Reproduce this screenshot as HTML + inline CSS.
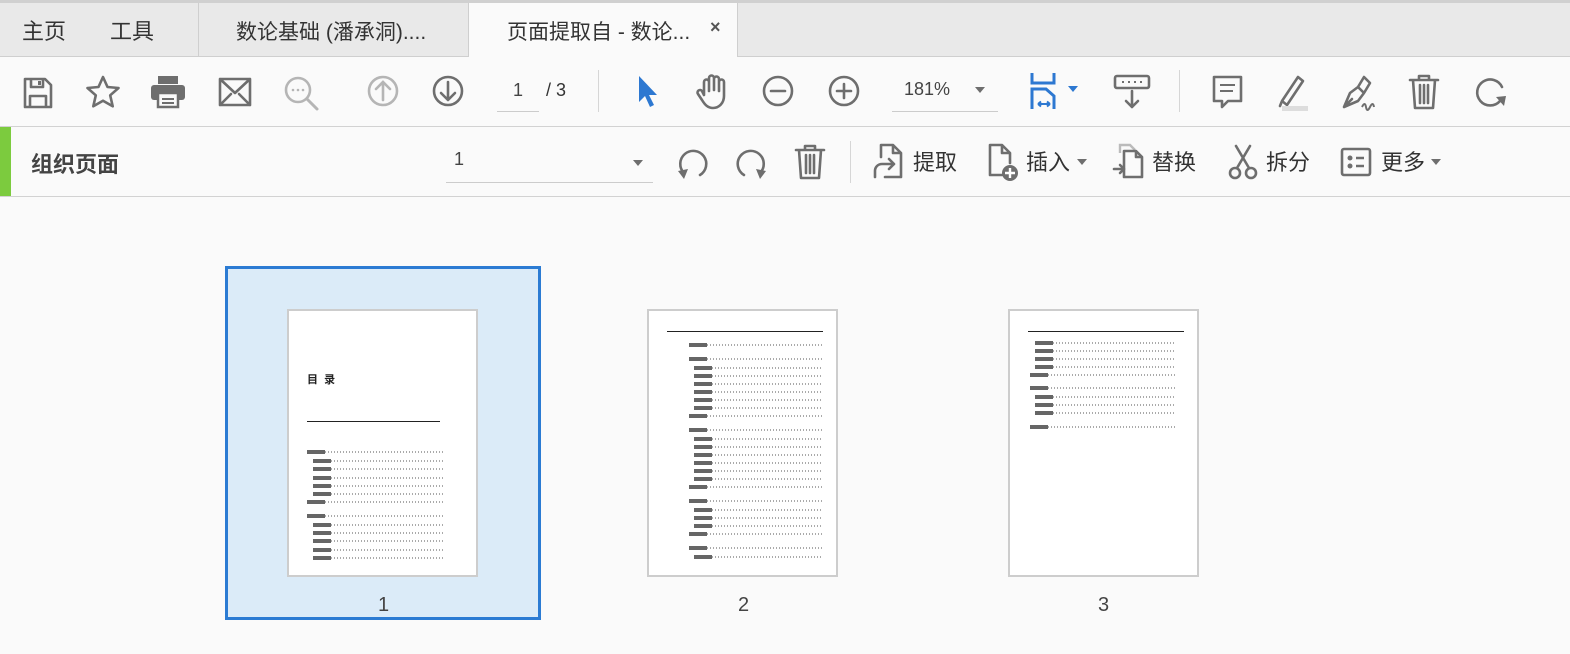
<!DOCTYPE html>
<html><head><meta charset="utf-8"><style>
*{margin:0;padding:0;box-sizing:border-box}
body{width:1570px;height:654px;overflow:hidden;background:#fafafa;font-family:"Liberation Sans","Noto Sans CJK SC",sans-serif;color:#333;position:relative}
.abs{position:absolute}
#tabs{left:0;top:0;width:1570px;height:57px;background:#e9e9e9;border-top:3px solid #d0d0d0;border-bottom:1px solid #cfcfcf}
.t{position:absolute;font-size:22px;color:#333;top:11px}
#tb{left:0;top:57px;width:1570px;height:70px;background:#fafafa;border-bottom:1px solid #d2d2d2}
#org{left:0;top:127px;width:1570px;height:70px;background:#fafafa;border-bottom:1px solid #d2d2d2}
svg{position:absolute;overflow:visible}
.g{fill:none;stroke:#6e6e6e;stroke-width:2.6;stroke-linecap:round;stroke-linejoin:round}
.lbl{position:absolute;font-size:22px;color:#333;top:18px}
.pg{position:absolute;background:#fff;border:2px solid #cdcdcd;width:191px;height:268px;top:309px}
.ln{position:absolute;height:2px;background-image:repeating-linear-gradient(90deg,#aaa 0 1px,transparent 1px 3px)}
.ln::before{content:"";position:absolute;left:0;top:-1px;width:18px;height:4px;background:#666}
.bk{position:absolute;height:4px;background:#444}
.num{position:absolute;font-size:20px;color:#444;top:594px}
</style></head><body>
<div id="tabs" class="abs">
 <div class="t" style="left:22px">主页</div>
 <div class="t" style="left:110px">工具</div>
 <div class="abs" style="left:198px;top:0;width:1px;height:53px;background:#cfcfcf"></div>
 <div class="t" style="left:236px;font-size:21px;top:13px">数论基础 (潘承洞)....</div>
 <div class="abs" style="left:468px;top:0;width:270px;height:54px;background:#fafafa;border-left:1px solid #cfcfcf;border-right:1px solid #cfcfcf"></div>
 <div class="t" style="left:507px;font-size:21px;top:13px">页面提取自 - 数论...</div>
 <div class="t" style="left:710px;font-size:18px;top:14px;font-weight:bold;color:#555">×</div>
</div>
<div id="tb" class="abs">
 <svg style="left:23px;top:20px" width="30" height="32"><path class="g" d="M2 2h20l6 6v22H2z M8 2v8h12V2 M7 30V19h16v11"/><rect x="15" y="4" width="3" height="4" fill="#6e6e6e"/></svg>
 <svg style="left:86px;top:18px" width="34" height="34"><path class="g" d="M17 2l4.5 10 11 1-8.3 7.3 2.5 11L17 25.7 7.3 31.3l2.5-11L1.5 13l11-1z"/></svg>
 <svg style="left:150px;top:18px" width="36" height="34"><rect x="8" y="1" width="20" height="8" fill="#6e6e6e"/><rect x="1" y="10" width="34" height="15" rx="3" fill="#6e6e6e"/><rect x="8" y="18" width="20" height="14" fill="#fafafa" stroke="#6e6e6e" stroke-width="2.5"/><path d="M12 24h12M12 28h12" stroke="#6e6e6e" stroke-width="2"/></svg>
 <svg style="left:218px;top:20px" width="34" height="30"><path class="g" d="M2 2h30v26H2z M2 2l15 14 15-14 M2 28l11-11 M32 28L21 17"/></svg>
 <svg style="left:283px;top:18px" width="38" height="38"><circle cx="15" cy="15" r="12" fill="none" stroke="#b5b5b5" stroke-width="2.6"/><path d="M24 24l10 10" stroke="#b5b5b5" stroke-width="3" stroke-linecap="round"/><circle cx="10" cy="15" r="1.3" fill="#b5b5b5"/><circle cx="15" cy="15" r="1.3" fill="#b5b5b5"/><circle cx="20" cy="15" r="1.3" fill="#b5b5b5"/></svg>
 <svg style="left:367px;top:18px" width="34" height="34"><circle cx="16" cy="16" r="14" fill="none" stroke="#b5b5b5" stroke-width="2.6"/><path d="M16 25V8M9 14l7-7 7 7" fill="none" stroke="#b5b5b5" stroke-width="2.6" stroke-linecap="round"/></svg>
 <svg style="left:432px;top:18px" width="34" height="34"><circle cx="16" cy="16" r="14" class="g"/><path class="g" d="M16 7v17M9 18l7 7 7-7"/></svg>
 <div class="abs" style="left:497px;top:23px;font-size:18px;color:#444;width:42px;text-align:center;border-bottom:1px solid #ccc;height:32px">1</div>
 <div class="abs" style="left:546px;top:23px;font-size:18px;color:#333">/ 3</div>
 <div class="abs" style="left:598px;top:13px;width:1px;height:42px;background:#d6d6d6"></div>
 <svg style="left:636px;top:18px" width="24" height="34"><path d="M3 1v26l6-6 5 11 4-2-5-10h8z" fill="#2d78d1"/></svg>
 <svg style="left:696px;top:16px" width="36" height="38"><path class="g" d="M8 22V9a2.5 2.5 0 015 0v9V5a2.5 2.5 0 015 0v12V6a2.5 2.5 0 015 0v12V9a2.5 2.5 0 015 0v14c0 7-5 12-11 12-5 0-8-3-11-8l-4-6a2.5 2.5 0 014-3z"/></svg>
 <svg style="left:762px;top:18px" width="34" height="34"><circle cx="16" cy="16" r="14" class="g"/><path class="g" d="M9 16h14"/></svg>
 <svg style="left:828px;top:18px" width="34" height="34"><circle cx="16" cy="16" r="14" class="g"/><path class="g" d="M9 16h14M16 9v14"/></svg>
 <div class="abs" style="left:892px;top:22px;width:106px;height:33px;border-bottom:1px solid #ccc;font-size:18px;color:#444;padding-left:12px">181%</div>
 <svg style="left:975px;top:30px" width="10" height="6"><path d="M0 0h10L5 6z" fill="#6e6e6e"/></svg>
 <svg style="left:1030px;top:16px" width="50" height="40"><path d="M2 0v10h22V0" fill="none" stroke="#2d78d1" stroke-width="3"/><path d="M2 36V16h14l8 7v13" fill="none" stroke="#2d78d1" stroke-width="3"/><path d="M8 31h12M8 31l3-2.5M8 31l3 2.5M20 31l-3-2.5M20 31l-3 2.5" stroke="#2d78d1" stroke-width="2"/><path d="M38 13h10l-5 6z" fill="#2d78d1"/></svg>
 <svg style="left:1114px;top:18px" width="36" height="36"><rect x="1" y="1" width="34" height="12" rx="2" class="g"/><path d="M8 7h2M14 7h2M20 7h2M26 7h2" stroke="#6e6e6e" stroke-width="2"/><path class="g" d="M18 16v16M12 26l6 6 6-6"/></svg>
 <div class="abs" style="left:1179px;top:13px;width:1px;height:42px;background:#d6d6d6"></div>
 <svg style="left:1212px;top:18px" width="32" height="36"><path class="g" d="M2 2h27v24H16l-6 6v-6H2z"/><path d="M8 10h15M8 16h13" stroke="#6e6e6e" stroke-width="2"/></svg>
 <svg style="left:1274px;top:16px" width="40" height="40"><path class="g" d="M8 28l16-24 5 4-16 24z M8 28l-2 5"/><rect x="8" y="33" width="26" height="5" fill="#ddd"/></svg>
 <svg style="left:1340px;top:16px" width="40" height="40"><path class="g" d="M4 34l6-14 8-6 6 6-6 8z M18 14l6-10 6 6-6 10 M4 34l8-8"/><path d="M22 34q3-6 4 0t4 0t4 0" fill="none" stroke="#6e6e6e" stroke-width="2"/></svg>
 <svg style="left:1408px;top:16px" width="32" height="38"><path class="g" d="M2 7h28M11 7V3h10v4M5 7l2 28h18l2-28M12 12v18M16 12v18M20 12v18"/></svg>
 <svg style="left:1474px;top:18px" width="34" height="34"><path class="g" d="M26 26A13 13 0 1 1 28 12"/><path d="M22 22l8 9 2-10z" fill="#6e6e6e"/></svg>
</div>
<div id="org" class="abs">
 <div class="abs" style="left:0;top:0;width:11px;height:69px;background:#7ccb3e"></div>
 <div class="abs" style="left:31px;top:20px;font-size:22px;font-weight:bold;color:#444">组织页面</div>
 <div class="abs" style="left:446px;top:22px;width:207px;height:34px;border-bottom:1px solid #ccc;font-size:18px;color:#444;padding-left:8px">1</div>
 <svg style="left:633px;top:33px" width="10" height="6"><path d="M0 0h10L5 6z" fill="#6e6e6e"/></svg>
 <svg style="left:676px;top:18px" width="34" height="36"><path class="g" d="M8 28A13 13 0 1 1 24 30"/><path d="M2 26l10-2-4 10z" fill="#6e6e6e"/></svg>
 <svg style="left:734px;top:18px" width="34" height="36"><path class="g" d="M26 28A13 13 0 1 0 10 30"/><path d="M32 26l-10-2 4 10z" fill="#6e6e6e"/></svg>
 <svg style="left:794px;top:16px" width="32" height="38"><path class="g" d="M2 7h28M11 7V3h10v4M5 7l2 28h18l2-28M12 12v18M16 12v18M20 12v18"/></svg>
 <div class="abs" style="left:850px;top:14px;width:1px;height:42px;background:#d6d6d6"></div>
 <svg style="left:873px;top:16px" width="32" height="38"><path class="g" d="M8 14V2h12l8 8v24H12 M20 2v8h8"/><path class="g" d="M2 34v-6c0-4 3-7 7-7h12M16 16l5 5-5 5"/></svg>
 <div class="lbl" style="left:913px">提取</div>
 <svg style="left:988px;top:16px" width="34" height="40"><path class="g" d="M14 32H2V2h12l8 8v10 M14 2v8h8"/><circle cx="22" cy="30" r="8" fill="#6e6e6e"/><path d="M22 25v10M17 30h10" stroke="#fff" stroke-width="2.4"/></svg>
 <div class="lbl" style="left:1026px">插入</div>
 <svg style="left:1077px;top:32px" width="10" height="6"><path d="M0 0h10L5 6z" fill="#6e6e6e"/></svg>
 <svg style="left:1112px;top:16px" width="36" height="40"><path d="M8 10V2h10l5 5" fill="none" stroke="#bbb" stroke-width="2.4"/><path class="g" d="M12 34h18V14l-6-6H12z M24 8v6h6"/><path class="g" d="M2 26h10M8 22l4 4-4 4"/></svg>
 <div class="lbl" style="left:1152px">替换</div>
 <svg style="left:1228px;top:16px" width="32" height="40"><circle cx="7" cy="30" r="5" class="g"/><circle cx="23" cy="30" r="5" class="g"/><path class="g" d="M9 25L22 3M21 25L8 3"/></svg>
 <div class="lbl" style="left:1266px">拆分</div>
 <svg style="left:1340px;top:20px" width="34" height="32"><rect x="2" y="2" width="28" height="26" rx="2" class="g"/><circle cx="10" cy="11" r="2.5" fill="#6e6e6e"/><circle cx="10" cy="19" r="2.5" fill="#6e6e6e"/><path d="M16 11h8M16 19h8" stroke="#6e6e6e" stroke-width="2.6"/></svg>
 <div class="lbl" style="left:1381px">更多</div>
 <svg style="left:1431px;top:32px" width="10" height="6"><path d="M0 0h10L5 6z" fill="#6e6e6e"/></svg>
</div>

<div class="abs" style="left:225px;top:266px;width:316px;height:354px;background:#dbebf8;border:3px solid #2b7bd3"></div>
<div class="pg" style="left:287px">
 <div class="abs" style="left:18px;top:60px;font-size:11px;font-weight:bold;color:#222">目&nbsp;&nbsp;录</div>
 <div class="abs" style="left:18px;top:110px;width:133px;height:1px;background:#222"></div>
 <div class="ln" style="left:18px;top:140px;width:136px"></div>
 <div class="ln" style="left:24px;top:149px;width:130px"></div>
 <div class="ln" style="left:24px;top:157px;width:130px"></div>
 <div class="ln" style="left:24px;top:166px;width:130px"></div>
 <div class="ln" style="left:24px;top:174px;width:130px"></div>
 <div class="ln" style="left:24px;top:182px;width:130px"></div>
 <div class="ln" style="left:18px;top:190px;width:136px"></div>
 <div class="ln" style="left:18px;top:204px;width:136px"></div>
 <div class="ln" style="left:24px;top:213px;width:130px"></div>
 <div class="ln" style="left:24px;top:221px;width:130px"></div>
 <div class="ln" style="left:24px;top:229px;width:130px"></div>
 <div class="ln" style="left:24px;top:238px;width:130px"></div>
 <div class="ln" style="left:24px;top:246px;width:130px"></div>
</div>
<div class="num" style="left:378px">1</div>

<div class="pg" style="left:647px">
 <div class="abs" style="left:18px;top:20px;width:156px;height:1px;background:#222"></div>
 <div class="ln" style="left:40px;top:33px;width:134px"></div>
 <div class="ln" style="left:40px;top:47px;width:134px"></div>
 <div class="ln" style="left:45px;top:56px;width:129px"></div>
 <div class="ln" style="left:45px;top:64px;width:129px"></div>
 <div class="ln" style="left:45px;top:72px;width:129px"></div>
 <div class="ln" style="left:45px;top:80px;width:129px"></div>
 <div class="ln" style="left:45px;top:88px;width:129px"></div>
 <div class="ln" style="left:45px;top:96px;width:129px"></div>
 <div class="ln" style="left:40px;top:104px;width:134px"></div>
 <div class="ln" style="left:40px;top:118px;width:134px"></div>
 <div class="ln" style="left:45px;top:127px;width:129px"></div>
 <div class="ln" style="left:45px;top:135px;width:129px"></div>
 <div class="ln" style="left:45px;top:143px;width:129px"></div>
 <div class="ln" style="left:45px;top:151px;width:129px"></div>
 <div class="ln" style="left:45px;top:159px;width:129px"></div>
 <div class="ln" style="left:45px;top:167px;width:129px"></div>
 <div class="ln" style="left:40px;top:175px;width:134px"></div>
 <div class="ln" style="left:40px;top:189px;width:134px"></div>
 <div class="ln" style="left:45px;top:198px;width:129px"></div>
 <div class="ln" style="left:45px;top:206px;width:129px"></div>
 <div class="ln" style="left:45px;top:214px;width:129px"></div>
 <div class="ln" style="left:40px;top:222px;width:134px"></div>
 <div class="ln" style="left:40px;top:236px;width:134px"></div>
 <div class="ln" style="left:45px;top:245px;width:129px"></div>
</div>
<div class="num" style="left:738px">2</div>

<div class="pg" style="left:1008px">
 <div class="abs" style="left:18px;top:20px;width:156px;height:1px;background:#222"></div>
 <div class="ln" style="left:25px;top:31px;width:140px"></div>
 <div class="ln" style="left:25px;top:39px;width:140px"></div>
 <div class="ln" style="left:25px;top:47px;width:140px"></div>
 <div class="ln" style="left:25px;top:55px;width:140px"></div>
 <div class="ln" style="left:20px;top:63px;width:145px"></div>
 <div class="ln" style="left:20px;top:76px;width:145px"></div>
 <div class="ln" style="left:25px;top:85px;width:140px"></div>
 <div class="ln" style="left:25px;top:93px;width:140px"></div>
 <div class="ln" style="left:25px;top:101px;width:140px"></div>
 <div class="ln" style="left:20px;top:115px;width:145px"></div>
</div>
<div class="num" style="left:1098px">3</div>
</body></html>
